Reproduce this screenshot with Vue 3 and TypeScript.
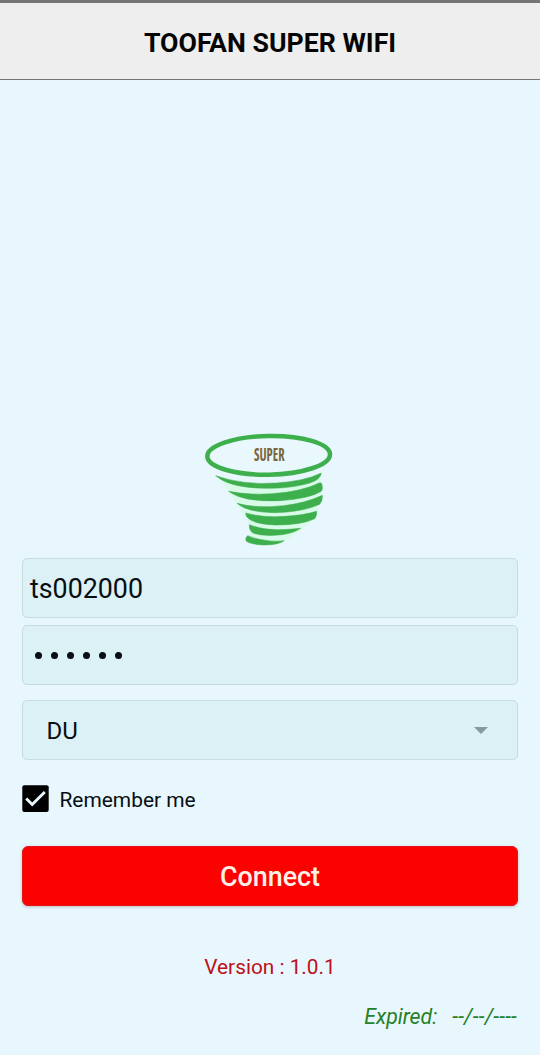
<script setup lang="ts">
import { ref } from 'vue'

const username = ref('ts002000')
const password = ref('123456')
const provider = ref('DU')
const remember = ref(true)
</script>

<template>
  <div class="screen">
    <header class="bar"><h1>TOOFAN SUPER WIFI</h1></header>
    <main class="content">
      <svg class="logo" viewBox="0 0 450 390" role="img" aria-label="Super">
        <g fill="#d3fae4">
          <path d="M74 158Q220 208 376 150L380 202L362 280L310 320L262 354L160 350L164 300L128 240Z" opacity=".8" />
        </g>
        <ellipse cx="221" cy="91" rx="184" ry="58" fill="#e8f8fc" stroke="#3daf4d" stroke-width="13.5" transform="rotate(-1 221 91)" />
        <g fill="#3daf4d" stroke="#3daf4d" stroke-width="1.5" stroke-linejoin="round">
          <path d="M62 152Q145 181 245 174Q330 168 379 144Q377 164 342 175Q275 194 185 189Q98 184 62 152Z" />
          <path d="M101 199Q160 211 230 206Q320 200 370 175Q380 170 381 180Q383 190 380 198Q345 221 255 227Q142 232 101 199Z" />
          <path d="M126 235Q185 251 265 242Q330 235 382 211Q384 227 374 238Q325 261 240 263Q155 262 126 235Z" />
          <path d="M152 264Q205 279 270 274Q325 271 365 259Q366 273 359 281Q319 300 243 300Q171 298 154 274Z" />
          <path d="M163 299Q200 314 249 314Q281 314 317 310Q295 325 260 329Q211 335 176 325Q162 318 163 299Z" />
          <path d="M158 332Q184 344 219 347Q242 350 267 347Q247 361 205 360Q168 358 154 349Q149 338 158 332Z" />
        </g>
        <text class="logo-text" x="177" y="109" textLength="92" lengthAdjust="spacingAndGlyphs">SUPER</text>
      </svg>

      <div class="field"><span class="username">{{ username }}</span></div>
      <div class="field password">
        <i v-for="(_, i) in password" :key="i" class="dot"></i>
      </div>
      <div class="field select">
        <span>{{ provider }}</span>
        <i class="arrow"></i>
      </div>
      <label class="remember" @click="remember = !remember">
        <svg class="check" viewBox="0 0 27 27">
          <rect x=".3" y=".3" width="26.4" height="26.7" rx="2" fill="#000" />
          <path v-if="remember" d="M4.2 13.5L10.2 19.5L22.8 7" fill="none" stroke="#e9f7fc" stroke-width="2.9" />
        </svg>
        <span class="remember-text">Remember me</span>
      </label>
      <button class="connect" type="button"><span>Connect</span></button>
      <p class="version">Version : 1.0.1</p>
      <p class="expired"><span>Expired:</span><span>--/--/----</span></p>
    </main>
  </div>
</template>

<style>
body {
  background: #e8f7fe;
}
</style>

<style scoped>
.screen {
  box-sizing: border-box;
  height: 1055px;
  overflow: hidden;
  background: #e8f7fe;
  color: #080e11;
  font-family: Roboto, "Liberation Sans", sans-serif;
}
.bar {
  box-sizing: border-box;
  height: 80px;
  border-top: 3px solid #747474;
  border-bottom: 1px solid #77747b;
  background: #eee;
  display: flex;
  align-items: center;
  justify-content: center;
}
h1 {
  margin: 4px 0 0;
  font-size: 26.7px;
  line-height: 32px;
  font-weight: 700;
  color: #050505;
  white-space: nowrap;
}
.content {
  display: flex;
  flex-direction: column;
  padding: 345px 22px 0;
}
.logo {
  width: 150px;
  height: 130px;
  margin-left: 173px;
}
.logo-text {
  font-family: "Open Sans", Roboto, sans-serif;
  font-stretch: condensed;
  font-size: 55px;
  font-weight: 700;
  fill: #78643d;
}
.field {
  box-sizing: border-box;
  height: 60px;
  margin-top: 3px;
  padding: 2px 7px 0;
  border: 1.5px solid #c7dbe1;
  border-radius: 5px;
  background: #dbf1f6;
  display: flex;
  align-items: center;
}
.username {
  font-size: 26.8px;
}
.password {
  margin-top: 7px;
  padding: 1px 12px 0;
  gap: 9px;
}
.dot {
  width: 7px;
  height: 7px;
  border-radius: 50%;
  background: #080e11;
}
.select {
  margin-top: 15px;
  padding: 2px 29px 0 23.5px;
  justify-content: space-between;
  font-size: 24px;
}
.arrow {
  margin-top: -2px;
  border-left: 7px solid transparent;
  border-right: 7px solid transparent;
  border-top: 7px solid #849a9f;
}
.remember {
  display: flex;
  align-items: center;
  height: 28px;
  margin-top: 25px;
  font-size: 20.9px;
}
.check {
  width: 27px;
  height: 27px;
  margin-top: -1px;
}
.remember-text {
  margin: 1px 0 0 10.5px;
}
.connect {
  height: 60px;
  margin: 33px 0 0;
  padding: 2px 0 0;
  border: 1px solid #e51519;
  border-radius: 6px;
  background: #fb0200;
  box-shadow: 0 1px 3px rgba(115, 70, 75, 0.35);
  color: #fff1e8;
  font: 500 26.9px Roboto, sans-serif;
}
.version {
  margin: 48px 0 0;
  text-align: center;
  font-size: 20.8px;
  line-height: 26px;
  color: #bd1019;
}
.expired {
  display: flex;
  justify-content: flex-end;
  gap: 15px;
  margin: 24px 1px 0 0;
  font-size: 21.3px;
  line-height: 26px;
  font-style: italic;
  color: #268126;
}
.expired span:last-child {
  letter-spacing: 0.2px;
}
</style>
